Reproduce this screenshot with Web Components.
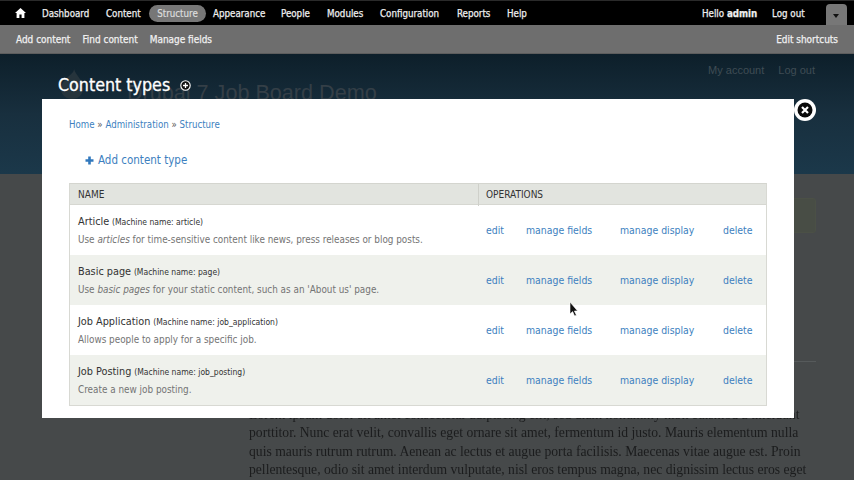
<!DOCTYPE html>
<html><head><meta charset="utf-8">
<style>
html,body{margin:0;padding:0;width:854px;height:480px;overflow:hidden;background:#46494a;font-family:"DejaVu Sans Condensed","DejaVu Sans",sans-serif}
</style></head><body>
<jb-page>
  <jb-toolbar></jb-toolbar>
  <jb-shortcuts></jb-shortcuts>
  <jb-header></jb-header>
  <jb-content></jb-content>
  <jb-modal>
    <jb-row slot="rows"><span slot="title">Article</span><span slot="machine">(Machine name: article)</span>Use <em>articles</em> for time-sensitive content like news, press releases or blog posts.</jb-row>
    <jb-row slot="rows" even><span slot="title">Basic page</span><span slot="machine">(Machine name: page)</span>Use <em>basic pages</em> for your static content, such as an 'About us' page.</jb-row>
    <jb-row slot="rows"><span slot="title">Job Application</span><span slot="machine">(Machine name: job_application)</span>Allows people to apply for a specific job.</jb-row>
    <jb-row slot="rows" even><span slot="title">Job Posting</span><span slot="machine">(Machine name: job_posting)</span>Create a new job posting.</jb-row>
  </jb-modal>
  <jb-cursor></jb-cursor>
</jb-page>
<script>
function def(name,html){customElements.define(name,class extends HTMLElement{constructor(){super();this.attachShadow({mode:"open"}).innerHTML=html}})}
def("jb-page",`<style>:host{display:block;position:relative;width:854px;height:480px;overflow:hidden;filter:blur(.45px)}</style><slot></slot>`);
def("jb-toolbar",`<style>
:host{display:flex;align-items:center;box-sizing:border-box;height:25px;background:#000;border-top:1px solid #2a2a2a;color:#eee;font-size:9.7px;-webkit-text-stroke:.25px #eee;position:relative}
span{display:block;white-space:nowrap}
svg{display:block;margin-left:15px;margin-right:16px}
.pill{background:#777;color:#ddd;-webkit-text-stroke:.2px #ddd;border-radius:9px;height:17px;line-height:17px;width:57px;text-align:center;margin-left:-8px}
.tab{position:absolute;left:826px;top:3px;width:21px;height:21px;background:#777;border-radius:4px 4px 0 0}
.tab i{position:absolute;left:7px;top:10px;border:3.5px solid transparent;border-top:4px solid #111;border-bottom:0}
</style>
<svg width="11" height="10" viewBox="0 0 11 10"><path fill="#fff" d="M5.5 0L11 5H9.4V10H6.6V6.6H4.4V10H1.6V5H0Z"/></svg>
<span style="width:64px">Dashboard</span><span style="width:51px">Content</span><span class="pill">Structure</span>
<span style="margin-left:7px;width:68px">Appearance</span><span style="width:46px">People</span><span style="width:53px">Modules</span><span style="width:77px">Configuration</span><span style="width:50px">Reports</span><span style="width:195px">Help</span>
<span style="width:70px">Hello <b>admin</b></span><span>Log out</span><div class="tab"><i></i></div>`);
def("jb-shortcuts",`<style>
:host{display:flex;align-items:center;box-sizing:border-box;height:29px;padding:0 16px;gap:12px;background:#6e6e6e;border-bottom:1px solid #5d5d5d;color:#f0f0f0;font-size:9.95px;-webkit-text-stroke:.25px #f0f0f0}
.r{margin-left:auto;margin-right:0}
</style><span>Add content</span><span>Find content</span><span>Manage fields</span><span class="r">Edit shortcuts</span>`);
def("jb-header",`<style>
:host{display:block;position:relative;box-sizing:border-box;height:120px;background:linear-gradient(#0d1f2a,#182f3e 50%,#1b384a);padding:20px 0 0 58px;color:#fff}
.top{display:flex;justify-content:flex-end;gap:14px;padding-right:39px;font:11px "Liberation Sans",sans-serif;color:#3f4c54;position:relative;top:-10px}
h1{margin:-11px 0 0;font:500 17.7px "DejaVu Sans Condensed","DejaVu Sans",sans-serif;-webkit-text-stroke:.3px #fff;display:flex;align-items:center;gap:10px;position:relative;z-index:1}
.site{position:absolute;left:127px;top:26px;font:21.6px "Liberation Sans",sans-serif;color:#343f47;white-space:nowrap}
.drop{position:absolute;left:60px;top:15px}
svg{display:block}
</style>
<svg class="drop" width="24" height="30" viewBox="0 0 24 30"><path fill="#26343c" d="M14 0C14 6 2 9 1 20c0 6 5 10 11 10s11-4 11-10C23 10 16 7 14 0Z"/></svg>
<div class="top"><span>My account</span><span>Log out</span></div>
<span class="site">Drupal 7 Job Board Demo</span>
<h1>Content types <svg width="11" height="11" viewBox="0 0 11 11"><circle cx="5.5" cy="5.5" r="4.7" fill="#111" stroke="#fff" stroke-width="1.1"/><path d="M5.5 3v5M3 5.5h5" stroke="#fff" stroke-width="1.3"/></svg></h1>`);
def("jb-content",`<style>
:host{display:block;position:relative;height:307px;font:13.65px/18.3px "Liberation Serif",serif;color:#1b1c1d}
.msg{position:absolute;left:249px;right:38px;top:24px;height:35px;background:#484d45;border:1px solid #4b5046;border-radius:3px;box-sizing:border-box}
hr{position:absolute;left:249px;right:38px;top:187px;margin:0;border:0;border-top:1px solid #565a5b}
p{margin:0;position:absolute;left:249px;top:232px;width:570px}
p span{display:block;white-space:nowrap}
</style><div class="msg"></div><hr>
<p><span>Lorem ipsum dolor sit amet consectetur adipiscing elit, sed diam nonummy nibh euismod a tincidunt</span>
<span>porttitor. Nunc erat velit, convallis eget ornare sit amet, fermentum id justo. Mauris elementum nulla</span>
<span>quis mauris rutrum rutrum. Aenean ac lectus et augue porta facilisis. Maecenas vitae augue est. Proin</span>
<span>pellentesque, odio sit amet interdum vulputate, nisl eros tempus magna, nec dignissim lectus eros eget</span></p>`);
def("jb-modal",`<style>
:host{position:absolute;left:42px;top:99px;width:752px;height:319px;box-sizing:border-box;background:#fff;padding:20px 27px 0;font-size:10px;color:#333}
a{color:#3d7fc0}
.crumb{height:12px;line-height:12px;font-size:9.65px;color:#555}
.add{margin:22px 0 0 16px;height:14px;line-height:14px;font-size:11.5px;color:#3d7fc0;display:flex;align-items:center;gap:4px}
.tbl{margin-top:16px;width:698px;box-sizing:border-box;border:1px solid #d8d9d3;border-top:1px solid #d4d5cf;border-bottom:1px solid #d8d9d3}
.head{display:grid;grid-template-columns:408px 1fr;height:20px;line-height:22px;background:#e2e4df;border-bottom:1px solid #d6d7d1;color:#333;font-size:10px}
.head div{padding-left:8px}.head div+div{border-left:1px solid #cfd0ca;padding-left:7px}
.close{position:absolute;left:752px;top:0;width:22px;height:22px;border-radius:50%;background:#fff;display:flex;align-items:center;justify-content:center}
svg{display:block}
</style>
<div class="crumb"><a>Home</a> » <a>Administration</a> » <a>Structure</a></div>
<div class="add"><svg width="9" height="9" viewBox="0 0 9 9"><path d="M4.5 .5v8M.5 4.5h8" stroke="#3178bd" stroke-width="2.6"/></svg>Add content type</div>
<div class="tbl"><div class="head"><div>NAME</div><div>OPERATIONS</div></div><slot name="rows"></slot></div>
<div class="close"><svg width="16" height="16" viewBox="0 0 16 16"><circle cx="8" cy="8" r="7.5" fill="#0a0a0a"/><path d="M5 5l6 6M11 5l-6 6" stroke="#fff" stroke-width="2.2"/></svg></div>`);
def("jb-row",`<style>
:host{display:grid;grid-template-columns:408px 1fr;height:50px;background:#fff;color:#747474;font-size:9.85px}
:host([even]){background:#eff1ec}
.n{padding:8.5px 0 0 8px}
.t{height:15px;line-height:15px;color:#333;white-space:nowrap;margin-bottom:4px}
::slotted([slot=title]){font-size:10.8px}
::slotted([slot=machine]){font-size:8.5px}
.d{line-height:14px;white-space:nowrap}
.o{display:flex;align-items:center;padding:0 0 0 8px;color:#3d7fc0;font-size:10.4px}
.o span{white-space:nowrap}
</style><div class="n"><div class="t"><slot name="title"></slot> <slot name="machine"></slot></div><div class="d"><slot></slot></div></div>
<div class="o"><span style="width:40px">edit</span><span style="width:94px">manage fields</span><span style="width:103px">manage display</span><span>delete</span></div>`);
def("jb-cursor",`<style>:host{position:absolute;left:569px;top:302px;display:block;width:10px;height:15px}svg{display:block}</style>
<svg width="10" height="15" viewBox="0 0 10 15"><path d="M1 0V12L3.6 9.6 5.6 14 7.4 13.2 5.4 9H8.6Z" fill="#111" stroke="#fff" stroke-width=".6"/></svg>`);
</script>
</body></html>
